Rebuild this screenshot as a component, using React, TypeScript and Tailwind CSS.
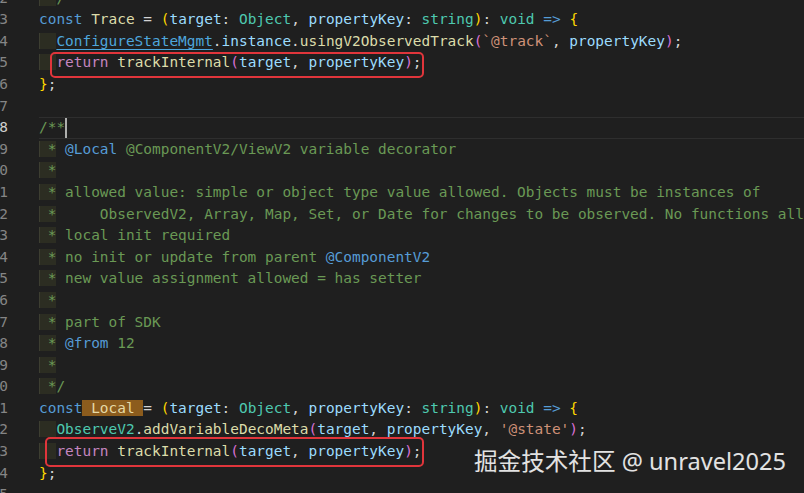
type Kind = 'kw' | 'ctl' | 'fn' | 'var' | 'type' | 'cls' | 'str' | 'p' | 'c' | 'tag' | 'b1' | 'b2' | 'hl';

type Tok = [string, Kind];

const COLORS: Record<Kind, string> = {
  kw: 'text-[#569cd6]',
  ctl: 'text-[#c586c0]',
  fn: 'text-[#dcdcaa]',
  var: 'text-[#9cdcfe]',
  type: 'text-[#4ec9b0]',
  cls: 'text-[#4ea6dc] underline underline-offset-[3px]',
  str: 'text-[#ce9178]',
  p: 'text-[#d4d4d4]',
  c: 'text-[#6a9955]',
  tag: 'text-[#569cd6]',
  b1: 'text-[#ffd700]',
  b2: 'text-[#da70d6]',
  hl: 'text-[#e6d9a6] bg-[#8c5c1d]',
};

interface Line {
  no: number;
  indent?: boolean;
  toks: Tok[];
}

const sig = (name: Tok[]): Tok[] => [
  ['const', 'kw'],
  ...name,
  ['= ', 'p'],
  ['(', 'b1'],
  ['target', 'var'],
  [': ', 'p'],
  ['Object', 'type'],
  [', ', 'p'],
  ['propertyKey', 'var'],
  [': ', 'p'],
  ['string', 'type'],
  [')', 'b1'],
  [': ', 'p'],
  ['void', 'type'],
  [' ', 'p'],
  ['=>', 'kw'],
  [' ', 'p'],
  ['{', 'b1'],
];

const ret: Tok[] = [
  ['return', 'ctl'],
  [' ', 'p'],
  ['trackInternal', 'fn'],
  ['(', 'b2'],
  ['target', 'var'],
  [', ', 'p'],
  ['propertyKey', 'var'],
  [')', 'b2'],
  [';', 'p'],
];

const LINES: Line[] = [
  { no: 2, indent: true, toks: [['/', 'c']] },
  { no: 3, toks: sig([[' ', 'p'], ['Trace', 'fn'], [' ', 'p']]) },
  {
    no: 4,
    indent: true,
    toks: [
      ['ConfigureStateMgmt', 'cls'],
      ['.', 'p'],
      ['instance', 'var'],
      ['.', 'p'],
      ['usingV2ObservedTrack', 'fn'],
      ['(', 'b2'],
      ['`@track`', 'str'],
      [', ', 'p'],
      ['propertyKey', 'var'],
      [')', 'b2'],
      [';', 'p'],
    ],
  },
  { no: 5, indent: true, toks: ret },
  { no: 6, toks: [['}', 'b1'], [';', 'p']] },
  { no: 7, toks: [] },
  { no: 8, toks: [['/**', 'c']] },
  {
    no: 9,
    indent: true,
    toks: [[' ', 'c'], ['@Local', 'tag'], [' @ComponentV2/ViewV2 variable decorator', 'c']],
  },
  { no: 10, indent: true, toks: [] },
  {
    no: 11,
    indent: true,
    toks: [[' allowed value: simple or object type value allowed. Objects must be instances of', 'c']],
  },
  {
    no: 12,
    indent: true,
    toks: [['     ObservedV2, Array, Map, Set, or Date for changes to be observed. No functions allowed', 'c']],
  },
  { no: 13, indent: true, toks: [[' local init required', 'c']] },
  {
    no: 14,
    indent: true,
    toks: [[' no init or update from parent ', 'c'], ['@ComponentV2', 'tag']],
  },
  { no: 15, indent: true, toks: [[' new value assignment allowed = has setter', 'c']] },
  { no: 16, indent: true, toks: [] },
  { no: 17, indent: true, toks: [[' part of SDK', 'c']] },
  { no: 18, indent: true, toks: [[' ', 'c'], ['@from', 'tag'], [' 12', 'c']] },
  { no: 19, indent: true, toks: [] },
  { no: 20, indent: true, toks: [['/', 'c']] },
  { no: 21, toks: sig([[' Local ', 'hl']]) },
  {
    no: 22,
    indent: true,
    toks: [
      ['ObserveV2', 'type'],
      ['.', 'p'],
      ['addVariableDecoMeta', 'fn'],
      ['(', 'b2'],
      ['target', 'var'],
      [', ', 'p'],
      ['propertyKey', 'var'],
      [', ', 'p'],
      ["'@state'", 'str'],
      [')', 'b2'],
      [';', 'p'],
    ],
  },
  { no: 23, indent: true, toks: ret },
  { no: 24, toks: [['}', 'b1'], [';', 'p']] },
  { no: 25, toks: [] },
];

// comment lines start with " *", code lines with two spaces
function Lead({ line }: { line: Line }) {
  if (!line.indent) return null;
  const isComment = line.toks.length === 0 || line.toks[0][1] === 'c' || line.toks[0][1] === 'tag';
  return (
    <span className="bg-[#2c2d22] shadow-[inset_1px_0_0_#3d3e31] text-[#6a9955]">
      {isComment ? ' *' : '  '}
    </span>
  );
}

export default function App() {
  return (
    <div className="relative w-[804px] h-[493px] overflow-hidden bg-[#1f1f1f] font-['DejaVu_Sans_Mono',monospace] text-[14.45px] leading-[21.6px]">
      <div className="mt-[-12.4px] flex flex-col">
        {LINES.map((line) => (
          <div key={line.no} className="flex h-[21.6px]">
            <div
              className={`w-[30px] ml-[-22px] shrink-0 text-right ${
                line.no === 8 ? 'text-[#d0d0d0]' : 'text-[#858585]'
              }`}
            >
              {line.no}
            </div>
            <div
              className={`ml-[31px] flex-1 whitespace-pre relative ${
                line.no === 8 ? 'shadow-[inset_0_1px_0_#2e2e2e,inset_0_-1px_0_#2e2e2e]' : ''
              }`}
            >
              <Lead line={line} />
              {line.toks.map(([text, kind], i) => (
                <span key={i} className={COLORS[kind]}>
                  {text}
                </span>
              ))}
              {line.no === 8 && (
                <span className="absolute left-[26px] top-[1px] w-[2px] h-[20px] bg-[#aeafad]" />
              )}
            </div>
          </div>
        ))}
      </div>

      {/* hand drawn highlights */}
      <div className="absolute left-[50px] top-[52px] w-[374px] h-[26px] border-2 border-[#e0353b] rounded-[5px]" />
      <div className="absolute left-[45px] top-[437px] w-[379px] h-[30px] border-2 border-[#e0353b] rounded-[5px]" />

      <div className="absolute left-[474px] top-[446px] text-[23.6px] leading-[30px] text-[#e2e2e2] font-['Noto_Sans','Noto_Sans_CJK_SC',sans-serif] whitespace-nowrap">
        掘金技术社区 @ unravel2025
      </div>
    </div>
  );
}
